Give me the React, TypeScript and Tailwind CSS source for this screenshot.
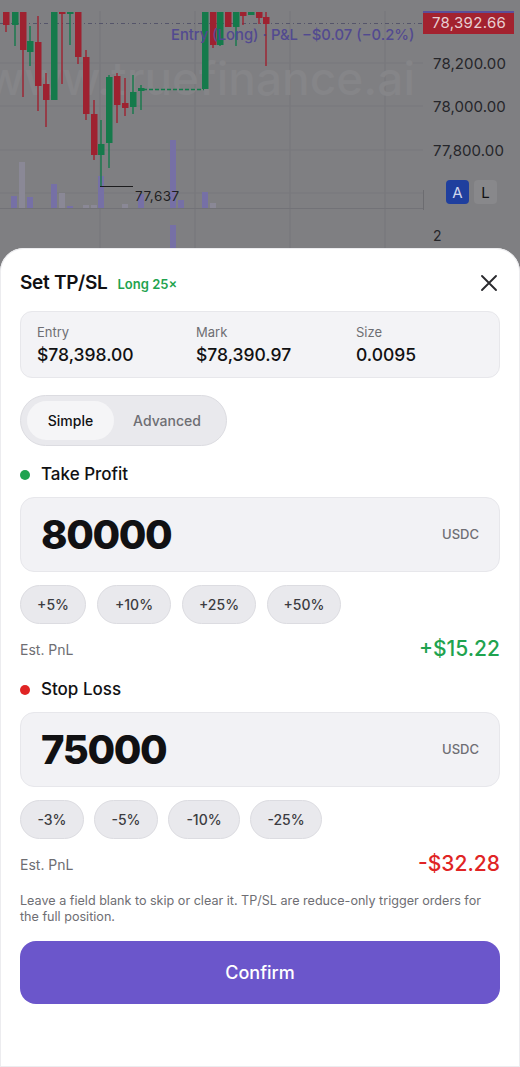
import React from "react";

type C = [number, "r" | "g", number, number, number, number];
const candles: C[] = [
  [6, "r", 12, 25, 12, 32],
  [15, "g", 12, 25, 12, 46],
  [23, "r", 12, 50, 12, 97],
  [30, "g", 41, 52, 26, 66],
  [38, "r", 42, 86, 16, 111],
  [46, "r", 84, 100, 73, 127],
  [54, "g", 12, 100, 12, 100],
  [62, "r", 12, 14, 12, 84],
  [70, "g", 12, 14, 12, 45],
  [78, "r", 12, 57, 12, 64],
  [86, "r", 57, 114, 50, 120],
  [94, "r", 114, 155, 100, 160],
  [101, "g", 144, 155, 120, 186],
  [109, "g", 77, 143, 75, 168],
  [117, "r", 76, 105, 73, 123],
  [125, "r", 103, 108, 78, 116],
  [133, "g", 92, 107, 75, 114],
  [141, "g", 88, 91, 85, 110],
  [205, "g", 12, 89, 12, 89],
  [213, "r", 12, 45, 12, 48],
  [220, "g", 12, 45, 12, 46],
  [228, "r", 12, 27, 12, 27],
  [236, "g", 12, 27, 12, 46],
  [243, "r", 12, 16, 12, 25],
  [251, "g", 12, 15, 12, 15],
  [259, "r", 12, 18, 12, 24],
  [266, "r", 17, 24, 12, 66],
];

type V = [number, number, "p" | "l"];
const vols: V[] = [
  [11, 196, "p"],
  [19, 162, "l"],
  [27, 197, "p"],
  [51, 184, "p"],
  [59, 193, "l"],
  [67, 206, "p"],
  [83, 205, "l"],
  [91, 205, "l"],
  [98, 176, "p"],
  [122, 204, "l"],
  [138, 194, "p"],
  [170, 140, "p"],
  [178, 200, "p"],
  [202, 192, "p"],
  [210, 203, "l"],
];

function Chart() {
  const red = "#9e2230";
  const green = "#157a4b";
  const ff = "Inter, 'Liberation Sans', sans-serif";
  return (
    <svg width="520" height="270" viewBox="0 0 520 270" className="block">
      <rect x="0" y="0" width="520" height="270" fill="#7f7f82" />
      {[100, 195, 290, 385].map((x) => (
        <line key={x} x1={x} y1="0" x2={x} y2="270" stroke="#77777a" strokeWidth="1" />
      ))}
      {[63, 106, 150, 193].map((y) => (
        <line key={y} x1="0" y1={y} x2="423" y2={y} stroke="#79797c" strokeWidth="1" />
      ))}
      <text x="-14" y="95" fontSize="46" fontFamily={ff} fontWeight="500" fill="#858588">
        www.truefinance.ai
      </text>
      <line x1="0" y1="208.5" x2="423" y2="208.5" stroke="#727277" strokeWidth="1" />
      {vols.map(([x, top, k], i) => (
        <rect key={i} x={x} y={top} width="6" height={208 - top} fill={k === "p" ? "#7670a6" : "#8a8896"} />
      ))}
      <rect x="170" y="225" width="6" height="45" fill="#7670a6" />
      <line x1="0" y1="23.5" x2="423" y2="23.5" stroke="#55556a" strokeWidth="1.2" strokeDasharray="4 3 1 3" />
      <line x1="143" y1="89.5" x2="204" y2="89.5" stroke={green} strokeWidth="1.5" strokeDasharray="4 2" />
      {candles.map(([cx, c, bt, bb, wt, wb], i) => (
        <g key={i}>
          <line x1={cx} y1={wt} x2={cx} y2={wb} stroke={c === "r" ? red : green} strokeWidth="1.4" />
          <rect x={cx - 3} y={bt} width="6.5" height={Math.max(bb - bt, 2)} fill={c === "r" ? red : green} />
        </g>
      ))}
      <rect x="0" y="0" width="520" height="11" fill="#7f7f82" />
      <line x1="100" y1="186.5" x2="133" y2="186.5" stroke="#1c1c1e" strokeWidth="1.2" />
      <text x="135" y="201" fontSize="13.5" fontFamily={ff} fill="#1f1f22" letterSpacing="0.5">
        77,637
      </text>
      <text x="171" y="40" fontSize="14.8" fontFamily={ff} fontWeight="500" fill="#524a90">
        Entry (Long) · P&amp;L −$0.07 (−0.2%)
      </text>
      <rect x="423" y="11" width="91" height="23" fill="#a3222f" />
      <rect x="423" y="11" width="91" height="2" fill="#5b4f99" />
      <text x="432" y="28" fontSize="15" fontFamily={ff} fill="#e8cfd2" letterSpacing="0.3">
        78,392.66
      </text>
      {[
        ["78,200.00", 69],
        ["78,000.00", 112],
        ["77,800.00", 156],
      ].map(([t, y]) => (
        <text key={t as string} x="433" y={y as number} fontSize="15" fontFamily={ff} fill="#26262a" letterSpacing="0.1">
          {t}
        </text>
      ))}
      <line x1="423.5" y1="190" x2="423.5" y2="210" stroke="#6c6c70" strokeWidth="1" />
      <rect x="446" y="180" width="23" height="24" rx="4" fill="#1f3f9e" />
      <text x="457.5" y="198" textAnchor="middle" fontSize="15" fontFamily={ff} fill="#cfd6ec">
        A
      </text>
      <rect x="474" y="180" width="23" height="24" rx="4" fill="#88888b" />
      <text x="485.5" y="198" textAnchor="middle" fontSize="15" fontFamily={ff} fill="#111114">
        L
      </text>
      <text x="433" y="241" fontSize="14" fontFamily={ff} fill="#26262a">
        2
      </text>
    </svg>
  );
}

function Chip({ label, w }: { label: string; w: string }) {
  return (
    <div
      className={`flex h-[39px] ${w} items-center justify-center rounded-full border border-[#dcdce1] bg-[#e9e9ed] text-[14px] font-medium text-[#3c3c41]`}
    >
      {label}
    </div>
  );
}

function Section({
  title,
  dot,
  value,
  chips,
  pnl,
  pnlColor,
  gap,
}: {
  title: string;
  dot: string;
  value: string;
  chips: { l: string; w: string }[];
  pnl: string;
  pnlColor: string;
  gap: string;
}) {
  return (
    <div className="flex flex-col">
      <div className="flex h-[22px] items-center gap-[11px] pl-[20px]">
        <span className={`h-[10px] w-[10px] rounded-full ${dot}`} />
        <span className="text-[17px] font-medium text-[#111113]">{title}</span>
      </div>
      <div className="mx-5 mt-[11px] flex h-[75px] items-center justify-between rounded-[14px] border border-[#e7e7eb] bg-[#f2f2f5] pl-[20px] pr-[20px]">
        <span className="text-[40px] font-extrabold leading-none tracking-[-1.4px] text-[#111113]">{value}</span>
        <span className="text-[13px] font-medium text-[#6e6e73]">USDC</span>
      </div>
      <div className={`mx-5 mt-[13px] flex ${gap}`}>
        {chips.map((c) => (
          <Chip key={c.l} label={c.l} w={c.w} />
        ))}
      </div>
      <div className="mx-5 mt-[12px] flex h-[26px] items-center justify-between">
        <span className="text-[14px] text-[#6e6e73]">Est. PnL</span>
        <span className={`text-[21px] font-medium ${pnlColor}`}>{pnl}</span>
      </div>
    </div>
  );
}

export default function App() {
  return (
    <div
      className="relative h-[1067px] w-[520px] overflow-hidden bg-[#7f7f82]"
      style={{ fontFamily: "Inter, 'Liberation Sans', sans-serif" }}
    >
      <Chart />
      <div className="absolute inset-x-0 bottom-0 top-[248px] rounded-t-[24px] bg-white ring-1 ring-inset ring-[#ececef]">
        <div className="mt-[23px] flex h-6 items-center justify-between pl-5 pr-[22px]">
          <div className="flex items-baseline gap-[10px]">
            <span className="text-[19px] font-semibold tracking-[-0.3px] text-[#111113]">Set TP/SL</span>
            <span className="text-[13px] font-semibold text-[#1fa34f]">Long 25×</span>
          </div>
          <svg width="18" height="18" viewBox="0 0 18 18" fill="none">
            <path d="M2 2 L16 16 M16 2 L2 16" stroke="#2a2a2e" strokeWidth="1.9" strokeLinecap="round" />
          </svg>
        </div>

        <div className="mx-5 mt-4 grid h-[67px] grid-cols-[159px_160px_1fr] items-center rounded-[12px] border border-[#e7e7eb] bg-[#f3f3f6] pl-4">
          {[
            ["Entry", "$78,398.00"],
            ["Mark", "$78,390.97"],
            ["Size", "0.0095"],
          ].map(([l, v]) => (
            <div key={l} className="flex flex-col">
              <span className="text-[13px] leading-[18px] text-[#6e6e73]">{l}</span>
              <span className="mt-[3px] text-[17.5px] font-medium leading-[22px] text-[#111113]">{v}</span>
            </div>
          ))}
        </div>

        <div className="ml-5 mt-[17px] flex h-[51px] w-[207px] items-center rounded-full border border-[#dcdce1] bg-[#e9e9ed] px-[6px]">
          <div className="flex h-[39px] w-[87px] items-center justify-center rounded-full bg-[#f5f5f7] text-[14px] font-medium text-[#111113]">
            Simple
          </div>
          <div className="flex flex-1 items-center justify-center text-[14px] font-medium text-[#6e6e73]">Advanced</div>
        </div>

        <div className="mt-[18px]">
          <Section
            title="Take Profit"
            dot="bg-[#1fa34f]"
            value="80000"
            chips={[
              { l: "+5%", w: "w-[66px]" },
              { l: "+10%", w: "w-[74px]" },
              { l: "+25%", w: "w-[74px]" },
              { l: "+50%", w: "w-[74px]" },
            ]}
            pnl="+$15.22"
            pnlColor="text-[#1fa34f]"
            gap="gap-[11px]"
          />
        </div>
        <div className="mt-[17px]">
          <Section
            title="Stop Loss"
            dot="bg-[#e02424]"
            value="75000"
            chips={[
              { l: "-3%", w: "w-[64px]" },
              { l: "-5%", w: "w-[64px]" },
              { l: "-10%", w: "w-[72px]" },
              { l: "-25%", w: "w-[72px]" },
            ]}
            pnl="-$32.28"
            pnlColor="text-[#e02424]"
            gap="gap-[10px]"
          />
        </div>

        <p className="mx-5 mt-4 pr-4 text-[12.6px] leading-[16px] text-[#6e6e73]">
          Leave a field blank to skip or clear it. TP/SL are reduce-only trigger orders for the full position.
        </p>

        <button className="mx-5 mt-4 flex h-[63px] w-[480px] items-center justify-center rounded-[16px] bg-[#6b56cb] text-[18px] font-medium text-white">
          Confirm
        </button>
      </div>
    </div>
  );
}
